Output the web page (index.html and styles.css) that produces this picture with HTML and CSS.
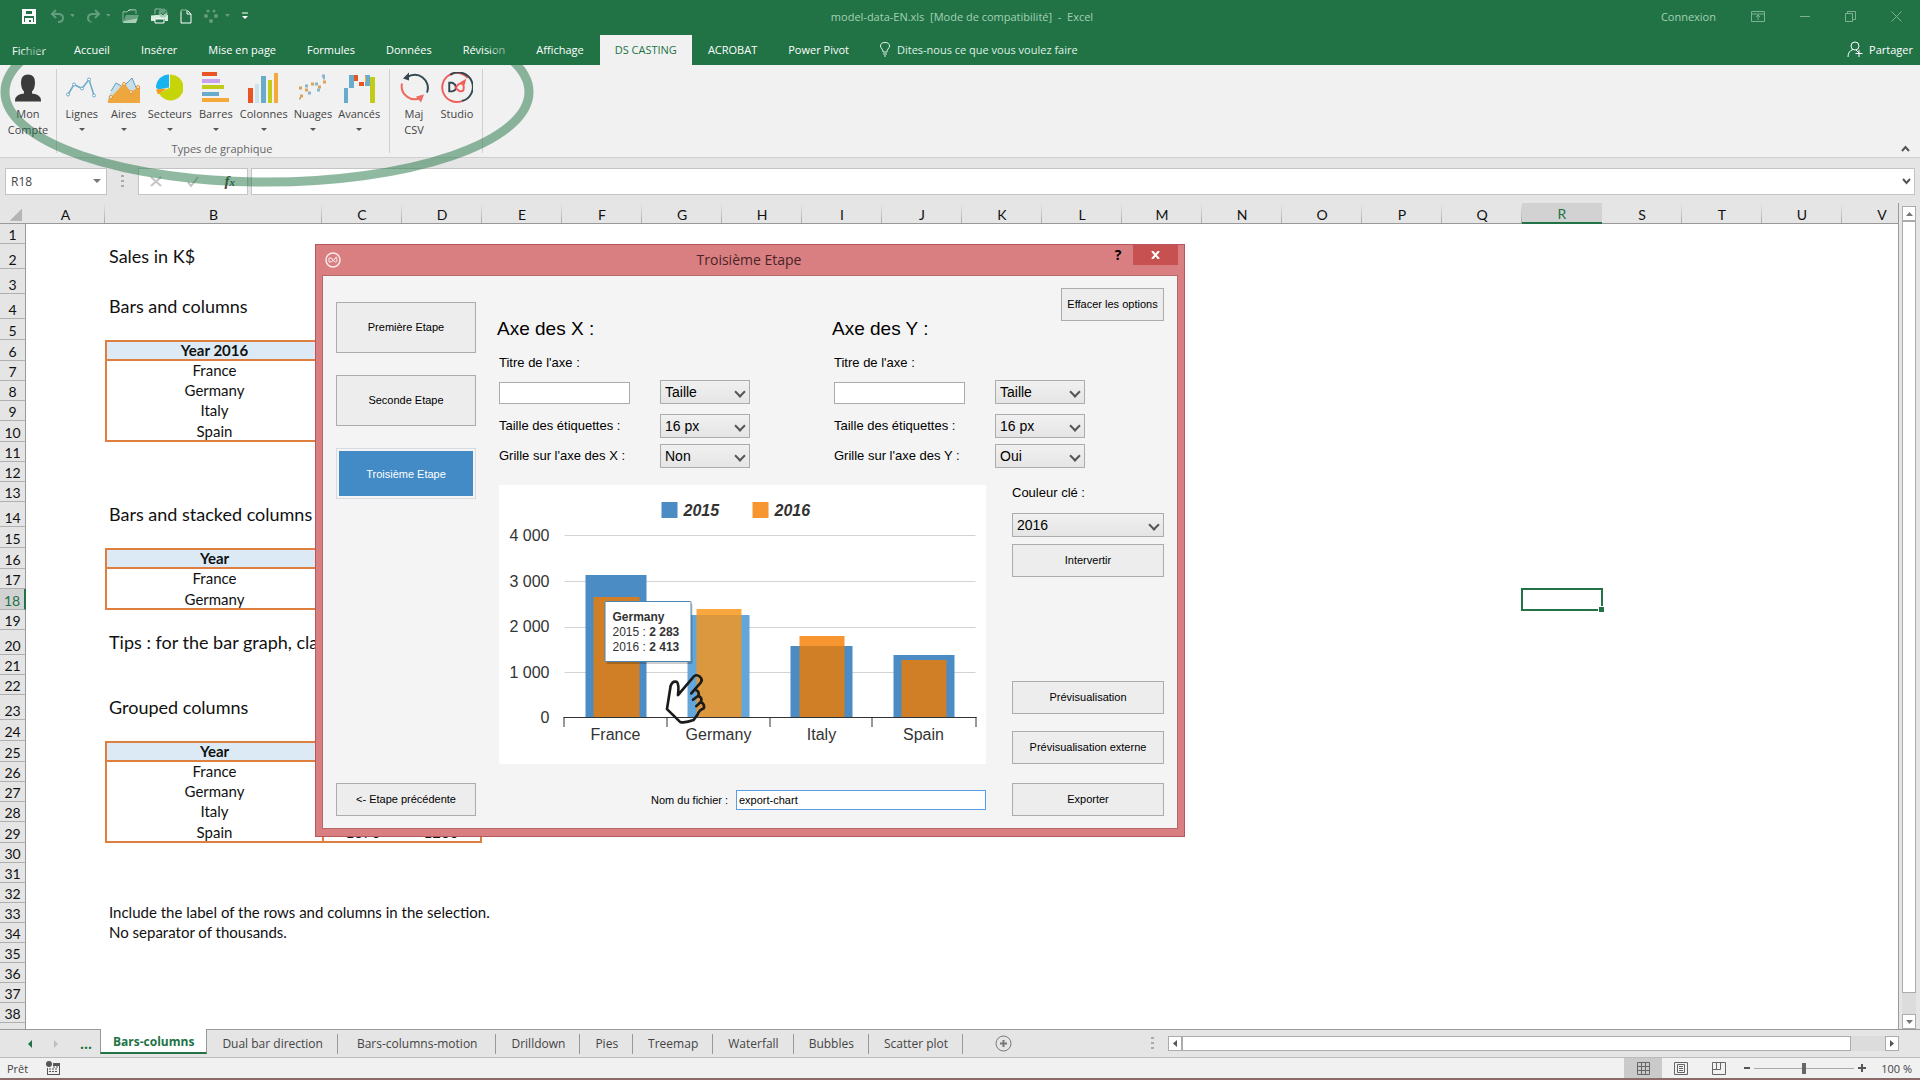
FILE: index.html
```html
<!DOCTYPE html>
<html lang="fr">
<head>
    <meta charset="UTF-8">
    <meta name="viewport" content="width=device-width, initial-scale=1.0">
    <title>model-data-EN.xls - Excel</title>
    <link rel="stylesheet" href="styles.css">
</head>
<body>
    <header class="top">
        <div class="titlebar">
            <div class="quick">
                <button class="icon-btn save" aria-label="Enregistrer"><svg width="14" height="15" viewBox="0 0 14 15"><path d="M1 1h12v13H1zM3 1v5h8V1M4 14v-4h6v4M6 11v3" fill="none" stroke="#fff" stroke-width="2"/></svg></button>
                <button class="icon-btn dim" aria-label="Annuler"><svg width="24" height="14" viewBox="0 0 24 14"><path d="M6 1 2 5l4 4M2 5h6q5 0 5 4t-5 4" fill="none" stroke="#fff" stroke-width="2"/><path d="M20 5h5l-2.500 3z" fill="#fff"/></svg></button>
                <button class="icon-btn dim" aria-label="Rétablir"><svg width="24" height="14" viewBox="0 0 24 14"><path d="M9 1l4 4-4 4M13 5H7Q2 5 2 9t4 4" fill="none" stroke="#fff" stroke-width="2"/><path d="M20 5h5l-2.500 3z" fill="#fff"/></svg></button>
                <button class="icon-btn" aria-label="Ouvrir"><svg width="17" height="15" viewBox="0 0 17 15"><path d="M1 13V3h4l2-2h7v4" fill="none" stroke="#e4f3e8"/><path d="M1 14 4 6h13l-3 8z" fill="#a9cfb6"/></svg></button>
                <button class="icon-btn" aria-label="Aperçu et impression"><svg width="17" height="16" viewBox="0 0 17 16"><path d="M4 6V1h6" fill="none" stroke="#fff"/><path d="M0 7h17v6h-3v-2H4v2H0z" fill="#d9ece0"/><circle cx="12" cy="5" r="4.500" fill="#a9cfb6"/><path d="m10 5 2 2 3-4" fill="none" stroke="#217346"/><path d="M4 11h9v4H4z" fill="#217346" stroke="#fff"/></svg></button>
                <button class="icon-btn" aria-label="Nouveau"><svg width="12" height="15" viewBox="0 0 12 15"><path d="M1 1h6l4 4v9H1zM7 1v4h4" fill="none" stroke="#fff"/></svg></button>
                <button class="icon-btn dim" aria-label="Formes"><svg width="26" height="14" viewBox="0 0 26 14"><g fill="#fff"><circle cx="4" cy="2" r="1.500"/><circle cx="10" cy="2" r="1.500"/><circle cx="2" cy="7" r="2"/><circle cx="12" cy="7" r="2"/><circle cx="7" cy="12" r="2"/><path d="M21 5h5l-2.500 3z"/></g></svg></button>
                <button class="icon-btn" aria-label="Personnaliser"><svg width="6" height="8" viewBox="0 0 6 8"><path d="M0 1h6" stroke="#fff"/><path d="M0 4h6L3 7z" fill="#fff"/></svg></button>
            </div>
            <div class="doc-name">model-data-EN.xls&nbsp; [Mode de compatibilité]&nbsp; -&nbsp; Excel</div>
            <div class="win-tools">
                <a class="connect" href="#">Connexion</a>
                <button class="icon-btn" aria-label="Options du ruban"><svg width="14" height="11" viewBox="0 0 14 11"><path d="M.5.500h13v10H.5zM.5 3h13M7 9V4M5 6l2-2 2 2" fill="none" stroke="#7db394"/></svg></button>
                <button class="icon-btn" aria-label="Réduire"><svg width="10" height="11" viewBox="0 0 10 11"><path d="M0 5.500h10" stroke="#7db394"/></svg></button>
                <button class="icon-btn" aria-label="Restaurer"><svg width="11" height="11" viewBox="0 0 11 11"><path d="M.5 2.500h7v8h-7zM2.500 2.500v-2h8v8h-3" fill="none" stroke="#7db394"/></svg></button>
                <button class="icon-btn" aria-label="Fermer"><svg width="11" height="11" viewBox="0 0 11 11"><path d="m.5.500 10 10m0-10-10 10" stroke="#7db394"/></svg></button>
            </div>
        </div>
        <nav class="tabs">
            <a class="tab file" href="#">Fichier</a>
            <a class="tab" href="#">Accueil</a>
            <a class="tab" href="#">Insérer</a>
            <a class="tab" href="#">Mise en page</a>
            <a class="tab" href="#">Formules</a>
            <a class="tab" href="#">Données</a>
            <a class="tab" href="#">Révision</a>
            <a class="tab" href="#">Affichage</a>
            <a class="tab active" href="#">DS CASTING</a>
            <a class="tab" href="#">ACROBAT</a>
            <a class="tab" href="#">Power Pivot</a>
            <a class="tell-me" href="#"><svg width="10" height="15" viewBox="0 0 10 15"><path d="M3 10Q3 8 2 7 .5 5.500.5 4q0-3.500 4.500-3.500T9.500 4Q9.500 5.500 8 7 7 8 7 10zM3 12h4M4 14h2" fill="none" stroke="#dff0e5"/></svg>Dites-nous ce que vous voulez faire</a>
            <a class="share" href="#"><svg width="16" height="17" viewBox="0 0 16 17"><circle cx="8" cy="5" r="4" fill="none" stroke="#fff"/><path d="M1 16q0-6 5-7.500M9 9l3 3M12 9v7M8.500 12.500h7" fill="none" stroke="#fff"/></svg>Partager</a>
        </nav>
    </header>

    <section class="ribbon">
        <div class="group account">
            <button class="tool"><svg width="28" height="28" viewBox="0 0 28 28"><path d="M7 9q0-8 7-8t7 8q0 6-3 9v2q9 1 9 7v1H1v-1q0-6 9-7v-2Q7 15 7 9z" fill="#3b3b3b"/></svg><span>Mon<br>Compte</span></button>
        </div>
        <div class="group charts">
            <div class="tools">
                <button class="tool drop"><svg width="31" height="28" viewBox="0 0 31 28"><path d="M2 21 8 11l8 4 7-9 5 16" fill="none" stroke="#6ba9c9" stroke-width="1.500"/><g fill="#fff" stroke="#6ba9c9"><circle cx="2" cy="21" r="1.500"/><circle cx="8" cy="11" r="1.500"/><circle cx="16" cy="15" r="1.500"/><circle cx="23" cy="6" r="1.500"/><circle cx="28" cy="22" r="1.500"/></g></svg><span>Lignes</span></button>
                <button class="tool drop"><svg width="32" height="31" viewBox="0 0 32 31"><path d="m0 25 8-14 7 4 9-9 6 17v5H0z" fill="#c8dfe8"/><path d="m3 19 5-8 7 4 9-9 5 12" fill="none" stroke="#5a9fc0"/><path d="m0 28 7-7 9-10 7 9 9-6v17H0z" fill="#eda73e"/><g fill="#fff" stroke="#e38c28"><circle cx="3" cy="25" r="1.500"/><circle cx="16" cy="12" r="1.500"/><circle cx="23" cy="20" r="1.500"/><circle cx="30" cy="15" r="1.500"/></g></svg><span>Aires</span></button>
                <button class="tool drop"><svg width="27" height="28" viewBox="0 0 27 28"><path d="M13 14V1A13 13 0 0 0 0 14l2 2z" fill="#18b4f1"/><path d="M14 14V1a13 13 0 1 1-11 19z" fill="#c6d40a"/><path d="M11 15 2 21 0 16z" fill="#f39a1e"/></svg><span>Secteurs</span></button>
                <button class="tool drop"><svg width="28" height="31" viewBox="0 0 28 31"><path d="M0 0h15v4H0z" fill="#e95423"/><path d="M0 7h18v4H0z" fill="#c9a3ee"/><path d="M0 13h22v4H0z" fill="#c0cc19"/><path d="M0 20h17v4H0z" fill="#69abca"/><path d="M0 26h27v4H0z" fill="#f6a93b"/></svg><span>Barres</span></button>
                <button class="tool drop"><svg width="31" height="31" viewBox="0 0 31 31"><path d="M0 16h5v15H0z" fill="#e95423"/><path d="M7 12h4v19H7z" fill="#c9e2ec"/><path d="M13 4h5v27h-5z" fill="#69abca"/><path d="M20 8h4v23h-4z" fill="#c0cc19"/><path d="M26 1h4v30h-4z" fill="#f6a93b"/></svg><span>Colonnes</span></button>
                <button class="tool drop"><svg width="29" height="28" viewBox="0 0 29 28"><path d="M1 13h3v3H1zM7 15h3v3H7zM2 21h3v3H2zM13 9h3v3h-3zM20 12h3v3h-3zM25 7h3v3h-3zM1 24h2v2H1z" fill="#dba45a"/><path d="M7 11h3v3H7zM10 18h3v3h-3zM17 9h3v3h-3zM24 1h3v3h-3zM19 15h3v3h-3zM25 4h2v2h-2z" fill="#8ab6c9"/></svg><span>Nuages</span></button>
                <button class="tool drop"><svg width="31" height="31" viewBox="0 0 31 31"><path d="M0 16h4v15H0zM5 3h5v13H5zM21 3h5v11h-5z" fill="#69abca"/><path d="M10 3h4v6h-4zM15 10h5v4h-5z" fill="#e95423"/><path d="M21 4h1v6h-1z" fill="#f6a93b"/><path d="M26 5h5v26h-5z" fill="#c0cc19"/></svg><span>Avancés</span></button>
            </div>
            <div class="group-name">Types de graphique</div>
        </div>
        <div class="group update">
            <button class="tool"><svg width="29" height="30" viewBox="0 0 29 30"><path d="M27 20A13 13 0 0 0 7 5" fill="none" stroke="#33474f" stroke-width="2"/><path d="m3 6 6-6v8z" fill="#33474f"/><path d="M2 11a13 13 0 0 0 19 14" fill="none" stroke="#ee6a60" stroke-width="2"/><path d="m24 22-3 8-5-6z" fill="#ee6a60"/></svg><span>Maj<br>CSV</span></button>
            <button class="tool"><svg width="32" height="32" viewBox="0 0 32 32"><path d="M21 30A15 15 0 1 1 27 6" fill="none" stroke="#ee5d57" stroke-width="2"/><path d="M9 3a15 15 0 1 1 12 27" fill="none" stroke="#33474f" stroke-width="2"/><path d="M8 11v9h3q4-1 4-4t-4-5z" fill="none" stroke="#33474f" stroke-width="2"/><path d="M14 15q3 5 6 5t3-4-3-4-5 4M19 12l5-3-1 4" fill="none" stroke="#ee5d57" stroke-width="2"/></svg><span>Studio</span></button>
        </div>
        <button class="icon-btn collapse" aria-label="Réduire le ruban"><svg width="9" height="7" viewBox="0 0 9 7"><path d="m1 6 3.500-4L8 6" fill="none" stroke="#555" stroke-width="2"/></svg></button>
    </section>

    <section class="formula">
        <div class="name-box"><input type="text" value="R18" aria-label="Zone Nom"><span class="arrow-down"></span></div>
        <span class="grip"></span>
        <div class="fx-box">
            <svg width="12" height="11" viewBox="0 0 12 11"><path d="m1 1 10 9M11 1 1 10" stroke="#c4c4c4" stroke-width="2"/></svg>
            <svg width="12" height="11" viewBox="0 0 12 11"><path d="m1 6 3 4 7-9" fill="none" stroke="#c4c4c4" stroke-width="2"/></svg>
            <span class="fx">f<small>x</small></span>
        </div>
        <div class="entry"><input type="text" aria-label="Barre de formule"><svg width="9" height="7" viewBox="0 0 9 7"><path d="m1 1 3.500 4L8 1" fill="none" stroke="#555" stroke-width="2"/></svg></div>
    </section>

    <main class="work">
        <div class="sheet">
            <table class="grid">
                <colgroup><col class="c-num"><col class="c-a"><col class="c-b"><col span="20"></colgroup>
                <thead>
                    <tr><th class="corner"></th><th>A</th><th>B</th><th>C</th><th>D</th><th>E</th><th>F</th><th>G</th><th>H</th><th>I</th><th>J</th><th>K</th><th>L</th><th>M</th><th>N</th><th>O</th><th>P</th><th>Q</th><th class="picked">R</th><th>S</th><th>T</th><th>U</th><th>V</th></tr>
                </thead>
                <tbody>
                    <tr><th>1</th></tr>
                    <tr class="tall"><th>2</th><td></td><td class="title">Sales in K$</td></tr>
                    <tr class="tall"><th>3</th></tr>
                    <tr class="tall"><th>4</th><td></td><td class="title">Bars and columns</td></tr>
                    <tr class="mid"><th>5</th></tr>
                    <tr class="mid"><th>6</th><td></td><td class="head">Year 2016</td><td class="head" colspan="2"></td></tr>
                    <tr><th>7</th><td></td><td class="val">France</td></tr>
                    <tr><th>8</th><td></td><td class="val">Germany</td></tr>
                    <tr><th>9</th><td></td><td class="val">Italy</td></tr>
                    <tr class="mid"><th>10</th><td></td><td class="val end">Spain</td></tr>
                    <tr><th>11</th></tr>
                    <tr><th>12</th></tr>
                    <tr><th>13</th></tr>
                    <tr class="tall"><th>14</th><td></td><td class="title">Bars and stacked columns</td></tr>
                    <tr class="mid"><th>15</th></tr>
                    <tr class="mid"><th>16</th><td></td><td class="head">Year</td><td class="head" colspan="2"></td></tr>
                    <tr><th>17</th><td></td><td class="val">France</td></tr>
                    <tr class="mid"><th class="picked">18</th><td></td><td class="val end">Germany</td><td colspan="15"></td><td class="cursor"></td></tr>
                    <tr><th>19</th></tr>
                    <tr class="tall"><th>20</th><td></td><td class="title">Tips : for the bar graph, clas</td></tr>
                    <tr><th>21</th></tr>
                    <tr><th>22</th></tr>
                    <tr class="tall"><th>23</th><td></td><td class="title">Grouped columns</td></tr>
                    <tr class="mid"><th>24</th></tr>
                    <tr class="mid"><th>25</th><td></td><td class="head">Year</td><td class="head" colspan="2"></td></tr>
                    <tr><th>26</th><td></td><td class="val">France</td></tr>
                    <tr><th>27</th><td></td><td class="val">Germany</td></tr>
                    <tr><th>28</th><td></td><td class="val">Italy</td></tr>
                    <tr class="mid"><th>29</th><td></td><td class="val end">Spain</td><td class="val end">1370</td><td class="val end last">1260</td></tr>
                    <tr><th>30</th></tr>
                    <tr><th>31</th></tr>
                    <tr><th>32</th></tr>
                    <tr><th>33</th><td></td><td>Include the label of the rows and columns in the selection.</td></tr>
                    <tr><th>34</th><td></td><td>No separator of thousands.</td></tr>
                    <tr><th>35</th></tr>
                    <tr><th>36</th></tr>
                    <tr><th>37</th></tr>
                    <tr><th>38</th></tr>
                    <tr><th></th></tr>
                </tbody>
            </table>
        </div>
        <div class="vscroll">
            <button class="scroll-btn" aria-label="Haut"><svg width="7" height="4" viewBox="0 0 7 4"><path d="M0 4h7L3.500 0z" fill="#777"/></svg></button>
            <div class="thumb"></div>
            <button class="scroll-btn" aria-label="Bas"><svg width="7" height="4" viewBox="0 0 7 4"><path d="M0 0h7L3.500 4z" fill="#777"/></svg></button>
        </div>
    </main>

    <div class="sheet-bar">
        <div class="sheet-nav">
            <svg width="4" height="8" viewBox="0 0 4 8"><path d="M4 0v8L0 4z" fill="#217346"/></svg>
            <svg width="4" height="8" viewBox="0 0 4 8"><path d="M0 0v8l4-4z" fill="#bdbdbd"/></svg>
            <span>...</span>
        </div>
        <button class="sheet-tab active">Bars-columns</button>
        <button class="sheet-tab">Dual bar direction</button>
        <button class="sheet-tab long">Bars-columns-motion</button>
        <button class="sheet-tab">Drilldown</button>
        <button class="sheet-tab">Pies</button>
        <button class="sheet-tab">Treemap</button>
        <button class="sheet-tab">Waterfall</button>
        <button class="sheet-tab">Bubbles</button>
        <button class="sheet-tab">Scatter plot</button>
        <button class="icon-btn add" aria-label="Nouvelle feuille"><svg width="17" height="17" viewBox="0 0 17 17"><circle cx="8.500" cy="8.500" r="7.500" fill="none" stroke="#777"/><path d="M8.500 5v7M5 8.500h7" stroke="#777" stroke-width="2"/></svg></button>
        <div class="hscroll">
            <span class="grip"></span>
            <button class="scroll-btn" aria-label="Gauche"><svg width="4" height="7" viewBox="0 0 4 7"><path d="M4 0v7L0 3.500z" fill="#555"/></svg></button>
            <div class="track"><div class="thumb"></div></div>
            <button class="scroll-btn" aria-label="Droite"><svg width="4" height="7" viewBox="0 0 4 7"><path d="M0 0v7l4-3.500z" fill="#555"/></svg></button>
        </div>
    </div>

    <footer class="status">
        <span>Prêt</span>
        <svg class="macro" width="14" height="14" viewBox="0 0 14 14"><circle cx="3" cy="3" r="3" fill="#555"/><path d="M7 2h7v12H1V7h1v6h11V5H7z" fill="#555"/><path d="M3 8h2m1 0h2m1 0h2M3 10.500h2m1 0h2m1 0h2M7 6h2m1 0h2" stroke="#555"/></svg>
        <div class="views">
            <button class="view on" aria-label="Normal"><svg width="13" height="13" viewBox="0 0 13 13"><path d="M.5.500h12v12H.5zM.5 4.500h12M.5 8.500h12M4.500.500v12M8.500.500v12" fill="none" stroke="#666"/></svg></button>
            <button class="view" aria-label="Mise en page"><svg width="14" height="13" viewBox="0 0 14 13"><path d="M.5.500h13v12H.5zM3.500 2.500h7v8h-7zM5 4.500h4M5 6.500h4M5 8.500h4" fill="none" stroke="#666"/></svg></button>
            <button class="view" aria-label="Sauts de page"><svg width="14" height="13" viewBox="0 0 14 13"><path d="M.5.500h13v12H.5zM4.500.500v7M.5 7.500h8V.500" fill="none" stroke="#666"/></svg></button>
        </div>
        <svg width="6" height="2" viewBox="0 0 6 2"><path d="M0 1h6" stroke="#555" stroke-width="2"/></svg>
        <input class="zoom" type="range" min="0" max="200" value="100" aria-label="Zoom">
        <svg width="8" height="8" viewBox="0 0 8 8"><path d="M0 4h8M4 0v8" stroke="#555" stroke-width="2"/></svg>
        <span class="percent">100 %</span>
    </footer>

    <!-- highlight ring around the add-in ribbon -->
    <svg class="ring" width="540" height="190" viewBox="0 0 540 190"><ellipse cx="267" cy="92" rx="262" ry="90" fill="none" stroke="#217346" stroke-opacity=".5" stroke-width="9"/></svg>

    <div class="dialog" role="dialog" aria-label="Troisième Etape">
        <div class="dialog-bar">
            <svg class="logo" width="16" height="16" viewBox="0 0 16 16"><circle cx="8" cy="8" r="7" fill="none" stroke="#fde9e9" stroke-width="1.500"/><path d="M4 6v4h1q3 0 3-2T5 6zM8 8q1 2 2.500 2T12 8t-1.500-2L9 8M10 6l2-1" fill="none" stroke="#fde9e9"/></svg>
            <h1>Troisième Etape</h1>
            <button class="help" aria-label="Aide">?</button>
            <button class="close" aria-label="Fermer"><svg width="9" height="8" viewBox="0 0 9 8"><path d="m1 0 7 8M8 0 1 8" stroke="#fff" stroke-width="2"/></svg></button>
        </div>
        <form class="dialog-body">
            <div class="steps">
                <button type="button" class="btn step">Première Etape</button>
                <button type="button" class="btn step">Seconde Etape</button>
                <button type="button" class="btn step current">Troisième Etape</button>
                <button type="button" class="btn back">&lt;- Etape précédente</button>
            </div>
            <div class="panel">
                <div class="heads">
                    <h2>Axe des X :</h2>
                    <h2>Axe des Y :</h2>
                    <button type="button" class="btn clear">Effacer les options</button>
                </div>
                <div class="axes">
                    <div class="axis">
                        <label class="wide" for="x-title">Titre de l'axe :</label>
                        <input id="x-title" type="text">
                        <span class="select"><select aria-label="Taille du titre X"><option>Taille</option></select></span>
                        <label for="x-size">Taille des étiquettes :</label>
                        <span class="select"><select id="x-size"><option>16 px</option></select></span>
                        <label for="x-grid">Grille sur l'axe des X :</label>
                        <span class="select"><select id="x-grid"><option>Non</option><option>Oui</option></select></span>
                    </div>
                    <div class="axis">
                        <label class="wide" for="y-title">Titre de l'axe :</label>
                        <input id="y-title" type="text">
                        <span class="select"><select aria-label="Taille du titre Y"><option>Taille</option></select></span>
                        <label for="y-size">Taille des étiquettes :</label>
                        <span class="select"><select id="y-size"><option>16 px</option></select></span>
                        <label for="y-grid">Grille sur l'axe des Y :</label>
                        <span class="select"><select id="y-grid"><option>Oui</option><option>Non</option></select></span>
                    </div>
                </div>
                <div class="preview">
                    <svg class="chart" viewBox="0 0 486 279">
                        <rect x="162" y="17" width="16" height="16" fill="#4a8cc3"/>
                        <rect x="253" y="17" width="16" height="16" fill="#f79630"/>
                        <g class="legend"><text x="184" y="31">2015</text><text x="275" y="31">2016</text></g>
                        <path d="M65 50.500h411M65 96.500h411M65 142.500h411M65 187.500h411" stroke="#d3d3d3"/>
                        <g class="scale"><text x="50" y="56">4 000</text><text x="50" y="102">3 000</text><text x="50" y="147">2 000</text><text x="50" y="193">1 000</text><text x="50" y="238">0</text></g>
                        <path d="M86 90h61v142H86zM291 161h62v71h-62zM394 170h61v62h-61z" fill="#4a8cc3"/>
                        <path d="M94 112h46v120H94zM300 161h45v71h-45zM402 175h45v57h-45z" fill="#d07f26"/>
                        <path d="M300 151h45v10h-45z" fill="#f79630"/>
                        <!-- hovered group -->
                        <path d="M188 130h62v102h-62z" fill="#64a5da"/>
                        <path d="M197 130h45v102h-45z" fill="#dc983e"/>
                        <path d="M197 124h45v6h-45z" fill="#fba73f"/>
                        <path d="M64 232.500h413M64.500 232v10M167.500 232v10M270.500 232v10M372.500 232v10M476.500 232v10" stroke="#333" fill="none"/>
                        <g class="names"><text x="116" y="255">France</text><text x="219" y="255">Germany</text><text x="322" y="255">Italy</text><text x="424" y="255">Spain</text></g>
                        <rect x="107" y="119" width="86" height="60" rx="1" fill="#000" opacity=".2"/>
                        <rect x="105.500" y="116.500" width="86" height="60" rx="1" fill="#fff" stroke="#4a86b0"/>
                        <g class="tip"><text x="113" y="136" class="b">Germany</text><text x="113" y="151">2015 : <tspan class="b">2 283</tspan></text><text x="113" y="166">2016 : <tspan class="b">2 413</tspan></text></g>
                        <g transform="translate(-20 -5) scale(.333)" fill="none" stroke="#1b1b1b" stroke-width="8" stroke-linecap="round" stroke-linejoin="round"><path d="M563 688 574 618Q580 602 592 606 600 612 596 646L640 594Q650 581 661 590 672 599 663 610L636 641M647 629Q662 634 657 648L641 660M657 648Q670 654 665 666L651 679M665 666Q678 674 673 686 660 690 655 704L643 721Q620 730 603 727L563 688"/></g>
                    </svg>
                    <div class="side">
                        <label for="key-color">Couleur clé :</label>
                        <span class="select"><select id="key-color"><option>2016</option><option>2015</option></select></span>
                        <button type="button" class="btn">Intervertir</button>
                        <button type="button" class="btn first">Prévisualisation</button>
                        <button type="button" class="btn">Prévisualisation externe</button>
                    </div>
                </div>
                <div class="export">
                    <label for="file-name">Nom du fichier :</label>
                    <input id="file-name" type="text" value="export-chart">
                    <button type="button" class="btn">Exporter</button>
                </div>
            </div>
        </form>
    </div>
</body>
</html>
```

FILE: styles.css
```css
* {
    box-sizing: border-box;
}

body {
    margin: 0;
    height: 100vh;
    display: flex;
    flex-direction: column;
    overflow: hidden;
    position: relative;
    background-color: #e5e5e5;
    color: #444;
    font-family: "Open Sans", sans-serif;
    font-size: 11px;
}

a {
    color: inherit;
    text-decoration: none;
}

button, input, select {
    font: inherit;
    color: inherit;
    margin: 0;
    padding: 0;
    border: 0;
    border-radius: 0;
    background: none;
}

svg {
    display: block;
    flex: none;
}

/* title bar and tabs */
.top {
    background-color: #217346;
    color: #fff;
}

.titlebar {
    display: flex;
    justify-content: space-between;
    align-items: center;
    height: 32px;
    padding: 0 18px 0 22px;
}

.quick, .win-tools {
    display: flex;
    align-items: center;
    flex: 1;
}

.quick {
    gap: 12px;
}

.quick .save {
    margin-right: 2px;
}

.dim {
    opacity: .3;
}

.win-tools {
    justify-content: flex-end;
    gap: 35px;
}

.doc-name, .connect {
    color: #a3d1b4;
}

.tabs {
    display: flex;
    height: 33px;
    padding-top: 3px;
    padding-right: 7px;
    gap: 1px;
}

.tab, .tell-me, .share {
    display: flex;
    align-items: center;
    padding: 0 15px 2px;
}

.tab.file {
    padding: 0 12px 0 12px;
}

.tab.active {
    background-color: #f1f1f1;
    color: #217346;
}

.tell-me {
    gap: 7px;
    color: #dff0e5;
}

.share {
    margin-left: auto;
    padding: 0 0 2px;
    gap: 6px;
}

/* ribbon */
.ribbon {
    display: flex;
    height: 93px;
    padding: 4px 0;
    background-color: #f1f1f1;
    border-bottom: 1px solid #cfcfcf;
}

.group {
    border-right: 1px solid #d0d0d0;
}

.account {
    width: 57px;
    display: flex;
    justify-content: center;
}

.charts {
    width: 333px;
    display: flex;
    flex-direction: column;
    align-items: center;
    justify-content: space-between;
    padding-right: 2px;
}

.tools {
    display: flex;
    gap: 6px;
}

.update {
    width: 93px;
    display: flex;
    justify-content: center;
    gap: 7px;
    padding-right: 1px;
}

.tool {
    display: flex;
    flex-direction: column;
    align-items: center;
    min-width: 36px;
    line-height: 16px;
    justify-content: flex-start;
}

.tool svg {
    height: 31px;
    margin: 3px 0;
}

.drop::after {
    content: "";
    margin-top: 6px;
    border: 3px solid transparent;
    border-top-color: #555;
}

.group-name {
    margin-bottom: -4px;
    line-height: 16px;
    color: #666;
}

.collapse {
    margin: auto 10px 0 auto;
    padding-bottom: 1px;
}

/* formula bar */
.formula {
    display: flex;
    height: 45px;
    padding: 10px 5px 8px;
}

.name-box, .fx-box, .entry {
    display: flex;
    align-items: center;
    background-color: #fff;
    border: 1px solid #c4c4c4;
}

.name-box {
    width: 102px;
    padding: 0 5px;
    font-size: 12px;
}

.name-box input {
    flex: 1;
    min-width: 0;
}

.arrow-down {
    margin-top: 3px;
    border: 4px solid transparent;
    border-top-color: #777;
}

.grip {
    width: 3px;
    height: 13px;
    margin: auto 14px;
    background: repeating-linear-gradient(#aaa 0 2px, transparent 2px 5px);
}

.fx-box {
    width: 110px;
    padding: 0 12px 0 11px;
    justify-content: space-between;
}

.fx {
    font: italic bold 15px "Liberation Serif", serif;
}

.fx small {
    font-size: 11px;
}

.entry {
    flex: 1;
    margin-left: 3px;
    padding-right: 3px;
}

.entry input {
    flex: 1;
}

/* sheet */
.work {
    flex: 1;
    min-height: 0;
    display: flex;
}

.sheet {
    flex: 1;
    min-width: 0;
    overflow: hidden;
    background: linear-gradient(#e5e5e5 21px, #fff 21px);
    border-right: 1px solid #999;
}

.grid {
    table-layout: fixed;
    width: 1922px;
    border-spacing: 0;
    font-family: Lato, sans-serif;
    font-size: 15px;
    color: #111;
}

.grid col {
    width: 80px;
}

.grid .c-num {
    width: 26px;
}

.grid .c-a {
    width: 79px;
}

.grid .c-b {
    width: 217px;
}

.grid tr {
    height: 20px;
}

.grid tr.mid {
    height: 21px;
}

.grid tr.tall {
    height: 25px;
}

.grid th, .grid td {
    padding: 0;
    line-height: 17px;
    white-space: nowrap;
}

.grid td {
    padding: 0 0 2px 4px;
}

.grid th {
    font-size: 14px;
    font-weight: normal;
    background-color: #e5e5e5;
    vertical-align: bottom;
}

.grid thead th {
    height: 21px;
    border-bottom: 1px solid #999;
    background: linear-gradient(#e5e5e5, #aaa) right / 1px 100% no-repeat #e5e5e5;
}

.grid thead .corner {
    background: linear-gradient(135deg, transparent 50%, #b5b5b5 50%) 10px 6px / 12px 12px no-repeat #e5e5e5;
}

.grid tbody th {
    border-right: 1px solid #999;
    border-bottom: 1px solid #b0b0b0;
}

.grid thead .picked {
    background: #d2d2d2;
    color: #217346;
    border-bottom: 2px solid #217346;
}

.grid tbody .picked {
    background-color: #d2d2d2;
    color: #217346;
    border-right: 2px solid #217346;
}

.grid .title {
    padding-bottom: 0;
    font-size: 18px;
}

.grid .head {
    padding: 0;
    text-align: center;
    font-weight: bold;
    background-color: #dbeaf5;
    border: 2px solid #de7f3f;
    border-right: 0;
}

.grid .val {
    padding: 0 0 2px;
    text-align: center;
    border-left: 2px solid #de7f3f;
}

.grid .end {
    padding: 2px 0 0;
    border-bottom: 2px solid #de7f3f;
}

.grid .last {
    border-left: 0;
    border-right: 2px solid #de7f3f;
}

.cursor {
    position: relative;
    outline: 2px solid #217346;
    outline-offset: -1px;
}

.cursor::after {
    content: "";
    position: absolute;
    right: -3px;
    bottom: -3px;
    width: 5px;
    height: 5px;
    background-color: #217346;
    border: 1px solid #fff;
    box-sizing: content-box;
}

/* scroll bars */
.vscroll {
    display: flex;
    flex-direction: column;
    width: 14px;
    margin: 3px 4px 0 3px;
    background-color: #dcdcdc;
}

.scroll-btn {
    display: flex;
    align-items: center;
    justify-content: center;
    flex: none;
    width: 14px;
    height: 15px;
    background-color: #fff;
    border: 1px solid #ababab;
}

.thumb {
    background-color: #fff;
    border: 1px solid #ababab;
}

.vscroll .thumb {
    flex: 1;
    margin-bottom: 21px;
}

.sheet-bar {
    display: flex;
    height: 29px;
    border-top: 1px solid #999;
    border-bottom: 1px solid #bbb;
    padding-right: 21px;
}

.sheet-nav {
    display: flex;
    align-items: center;
    justify-content: flex-end;
    width: 100px;
    padding-right: 8px;
    gap: 22px;
    color: #217346;
    font-size: 14px;
    font-weight: bold;
}

.sheet-tab {
    position: relative;
    padding: 0 15px;
    font-size: 12px;
    line-height: 26px;
}

.sheet-tab.long {
    padding: 0 19px;
}

.sheet-tab:not(.active)::after {
    content: "";
    position: absolute;
    right: 0;
    top: 4px;
    height: 20px;
    border-right: 1px solid #999;
}

.sheet-tab.active {
    height: 25px;
    margin-top: -1px;
    padding: 0 12px;
    background-color: #fff;
    color: #217346;
    font-weight: bold;
    border: 1px solid #999;
    border-width: 0 1px;
    border-bottom: 2px solid #217346;
}

.add {
    margin-left: 32px;
}

.hscroll {
    display: flex;
    align-items: center;
    flex: 0 1 748px;
    margin-left: auto;
}

.hscroll .grip {
    margin: 0 14px 0 0;
}

.track {
    flex: 1;
    padding-right: 34px;
    background-color: #dcdcdc;
}

.track .thumb {
    height: 15px;
}

.status {
    display: flex;
    align-items: center;
    height: 22px;
    padding-left: 7px;
    padding-right: 8px;
    background-color: #f1f1f1;
    border-bottom: 2px solid #8c6a6a;
}

.macro {
    margin-left: 18px;
}

.views {
    display: flex;
    align-self: stretch;
    margin-left: auto;
    margin-right: 6px;
}

.view {
    display: flex;
    align-items: center;
    justify-content: center;
    width: 38px;
}

.view.on {
    background-color: #cacaca;
}

.zoom {
    appearance: none;
    width: 100px;
    height: 11px;
    margin: 0 4px;
    background: linear-gradient(#aaa, #aaa) center / 100% 1px no-repeat;
}

.zoom::-webkit-slider-thumb {
    appearance: none;
    width: 4px;
    height: 11px;
    background-color: #666;
}

.percent {
    margin-left: 15px;
}

.ring {
    position: absolute;
    left: 0;
    top: 0;
    pointer-events: none;
}

/* dialog window */
.dialog {
    position: absolute;
    left: 315px;
    top: 244px;
    width: 870px;
    padding: 0 6px 7px;
    background-color: #d97f82;
    border: 1px solid #b4585e;
    color: #000;
    font-family: "Liberation Sans", sans-serif;
    font-size: 11px;
}

.dialog-bar {
    display: flex;
    align-items: flex-start;
    height: 30px;
}

.logo {
    margin: 7px 0 0 3px;
}

.dialog-bar h1 {
    flex: 1;
    margin: 0;
    padding-left: 54px;
    text-align: center;
    font: 14px/29px "Open Sans", sans-serif;
    color: #4a2426;
}

.help {
    width: 30px;
    font: bold 14px/20px "Open Sans", sans-serif;
}

.close {
    display: flex;
    align-items: center;
    justify-content: center;
    width: 45px;
    height: 20px;
    background-color: #c75050;
}

.dialog-body {
    display: flex;
    gap: 23px;
    padding: 12px 13px;
    background-color: #f4f4f4;
    border: 1px solid #b4686c;
}

.steps {
    display: flex;
    flex-direction: column;
    gap: 22px;
    width: 140px;
    padding-top: 14px;
}

.btn {
    height: 33px;
    padding-bottom: 2px;
    background-color: #ededed;
    border: 1px solid #acacac;
    white-space: nowrap;
}

.step {
    height: 51px;
}

.step.current {
    color: #fff;
    background-color: #428bc6;
    background-clip: content-box;
    border-color: #d5dbe0;
    padding: 2px;
}

.back {
    margin-top: auto;
}

.panel {
    flex: 1;
}

.heads, .axes {
    display: grid;
    grid-template-columns: 335px 1fr auto;
}

.heads h2 {
    margin: 29px 0 0 -2px;
    font-size: 19px;
    line-height: 24px;
    font-weight: normal;
}

.clear {
    width: 103px;
}

.axes {
    margin-top: 13px;
}

.axis {
    display: grid;
    grid-template-columns: 161px 90px;
    grid-template-rows: 26px 34px 30px 24px;
    align-items: start;
    font-size: 13px;
    line-height: 24px;
}

.axis .wide {
    grid-column: span 2;
    line-height: 18px;
}

.axis input {
    width: 131px;
    height: 22px;
    margin-top: 2px;
    background-color: #fff;
    border: 1px solid #ababab;
}

.select {
    display: block;
    position: relative;
    height: 24px;
}

.select select {
    appearance: none;
    display: block;
    width: 100%;
    height: 24px;
    padding: 0 4px;
    font-size: 14px;
    line-height: 20px;
    background: linear-gradient(#f0f0f0, #e5e5e5);
    border: 1px solid #acacac;
}

.select::after {
    content: "";
    position: absolute;
    right: 6px;
    top: 8px;
    width: 6px;
    height: 6px;
    border: solid #555;
    border-width: 0 2px 2px 0;
    transform: rotate(45deg);
    pointer-events: none;
}

.preview {
    display: flex;
    margin-top: 17px;
}

.chart {
    width: 487px;
    height: 279px;
    background-color: #fff;
    font-size: 16px;
    fill: #333;
}

.legend {
    font-weight: bold;
    font-style: italic;
}

.scale {
    text-anchor: end;
}

.names {
    text-anchor: middle;
}

.tip {
    font-size: 12px;
}

.b {
    font-weight: bold;
}

.side {
    flex: 1;
    display: flex;
    flex-direction: column;
    margin-left: 26px;
}

.side label {
    font-size: 13px;
    line-height: 16px;
    margin-bottom: 12px;
}

.side .select {
    margin-bottom: 7px;
}

.side .first {
    margin-top: auto;
    margin-bottom: 17px;
}

.export {
    display: flex;
    align-items: center;
    margin-top: 19px;
}

.export label {
    margin-left: 152px;
    flex: 1;
}

.export input {
    width: 250px;
    height: 20px;
    padding: 0 2px;
    background-color: #fff;
    border: 1px solid #569de5;
}

.export .btn {
    width: 152px;
    margin-left: 26px;
}
```
